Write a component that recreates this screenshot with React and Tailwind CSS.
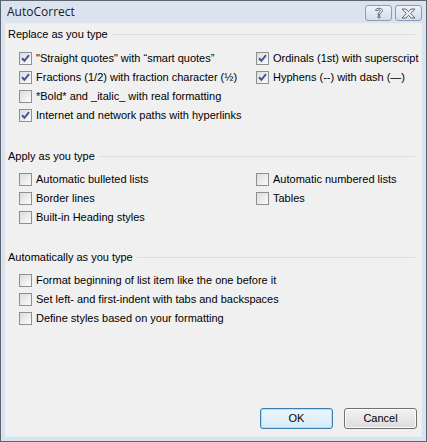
import React from 'react';

const font = { fontFamily: '"Liberation Sans", Arial, sans-serif' };

function Check({ checked }) {
  return (
    <span className="w-[13px] h-[13px] shrink-0 border border-[#8e8f8f] bg-gradient-to-br from-[#dcdcdc] to-[#fbfbfb] flex items-center justify-center">
      {checked && (
        <svg width="9" height="9" viewBox="0 0 9 9">
          <path d="M1 4.3 L3.4 6.8 L8 1.2" fill="none" stroke="#3f5596" strokeWidth="2" />
        </svg>
      )}
    </span>
  );
}

function Item({ label, checked }) {
  return (
    <div className="flex items-center gap-[4px] h-[19px] text-[11px] text-black">
      <Check checked={checked} />
      <span className="whitespace-nowrap">{label}</span>
    </div>
  );
}

function Section({ title }) {
  return (
    <div className="flex items-center gap-[4px] h-[13px] pr-[6px] text-[11px] text-black">
      <span className="whitespace-nowrap">{title}</span>
      <span className="flex-1 h-px bg-[#d5dfe5]" />
    </div>
  );
}

export default function App() {
  return (
    <div style={font} className="w-[427px] h-[442px] flex flex-col bg-[#dbe4ee] border border-[#5b6570]">
      {/* title bar */}
      <div className="h-[22px] flex items-center justify-between pl-[6px] pr-[4px]">
        <span className="text-[12px] text-[#1b1b1b]" style={{ fontFamily: '"Open Sans", sans-serif' }}>AutoCorrect</span>
        <div className="flex gap-[3px] pt-[2px]">
          <div className="w-[27px] h-[16px] rounded-[3px] border border-[#8d9cb0] bg-gradient-to-b from-[#eef3f9] to-[#d4dde8] flex items-center justify-center">
            <svg width="10" height="12" viewBox="0 0 10 12">
              <path d="M1.5 3.5 C1.5 0.5 8.5 0.5 8.5 3.5 C8.5 5.5 6 5.5 6 7.5 L4 7.5 C4 5 6.3 5 6.3 3.6 C6.3 2.4 3.7 2.4 3.7 3.6 Z M4 8.8 L6 8.8 L6 10.8 L4 10.8 Z" fill="#eef2f7" stroke="#4d5d72" strokeWidth="0.9" />
            </svg>
          </div>
          <div className="w-[27px] h-[16px] rounded-[3px] border border-[#8d9cb0] bg-gradient-to-b from-[#eef3f9] to-[#d4dde8] flex items-center justify-center">
            <svg width="15" height="11" viewBox="0 0 15 11">
              <path d="M1 1 L5 1 L7.5 3.8 L10 1 L14 1 L9.7 5.5 L14 10 L10 10 L7.5 7.2 L5 10 L1 10 L5.3 5.5 Z" fill="#eef2f7" stroke="#4d5d72" strokeWidth="0.9" />
            </svg>
          </div>
        </div>
      </div>

      {/* client area */}
      <div className="flex-1 mx-[4px] mb-[4px] bg-[#f0f0f0] border border-[#e8eef5] flex flex-col pl-[2px] pt-[4px]">
        <Section title="Replace as you type" />
        <div className="flex pl-[11px] pt-[8px]">
          <div className="w-[237px] flex flex-col">
            <Item checked label={'"Straight quotes" with \u201csmart quotes\u201d'} />
            <Item checked label="Fractions (1/2) with fraction character (½)" />
            <Item label="*Bold* and _italic_ with real formatting" />
            <Item checked label="Internet and network paths with hyperlinks" />
          </div>
          <div className="flex flex-col">
            <Item checked label="Ordinals (1st) with superscript" />
            <Item checked label="Hyphens (--) with dash (—)" />
          </div>
        </div>

        <div className="pt-[25px]">
          <Section title="Apply as you type" />
        </div>
        <div className="flex pl-[11px] pt-[7px]">
          <div className="w-[237px] flex flex-col">
            <Item label="Automatic bulleted lists" />
            <Item label="Border lines" />
            <Item label="Built-in Heading styles" />
          </div>
          <div className="flex flex-col">
            <Item label="Automatic numbered lists" />
            <Item label="Tables" />
          </div>
        </div>

        <div className="pt-[24px]">
          <Section title="Automatically as you type" />
        </div>
        <div className="flex flex-col pl-[11px] pt-[7px]">
          <Item label="Format beginning of list item like the one before it" />
          <Item label="Set left- and first-indent with tabs and backspaces" />
          <Item label="Define styles based on your formatting" />
        </div>

        <div className="flex-1" />
        <div className="flex justify-end gap-[11px] pr-[4px] pb-[7px] text-[11px] text-black">
          <button className="w-[73px] h-[21px] rounded-[3px] border border-[#3c7fb1] shadow-[inset_0_0_0_1px_#a6e3fb] bg-gradient-to-b from-[#eaf6fd] to-[#d6ecfa]">
            OK
          </button>
          <button className="w-[73px] h-[21px] rounded-[3px] border border-[#707070] shadow-[inset_0_0_0_1px_#fcfcfc] bg-gradient-to-b from-[#f2f2f2] to-[#dddddd]">
            Cancel
          </button>
        </div>
      </div>
    </div>
  );
}
